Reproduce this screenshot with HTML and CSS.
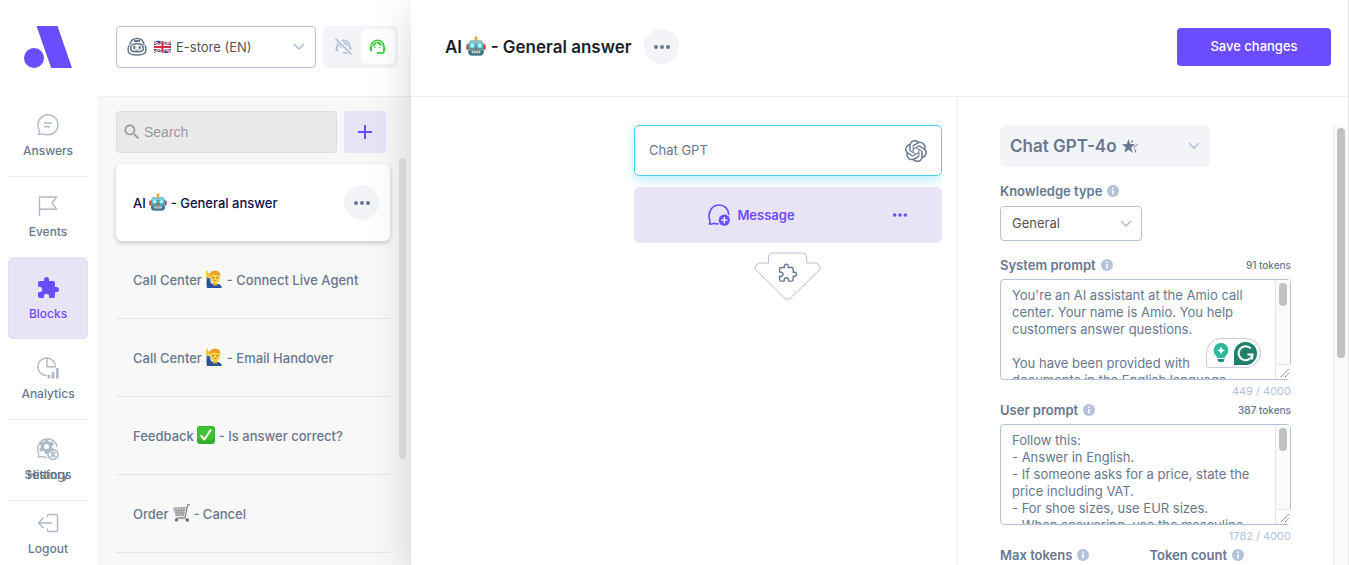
FILE: index.html
```html
<!DOCTYPE html>
<html lang="en">
<head>
  <meta charset="UTF-8" />
  <meta name="viewport" content="width=device-width, initial-scale=1.0" />
  <title>Blocks</title>
  <link rel="stylesheet" href="styles.css">
</head>
<body>

  <!-- ICONS -->
  <svg class="sprite" aria-hidden="true">
    <symbol id="i-robot" viewBox="0 0 18 18">
      <rect x="8.4" y="1.5" width="1.2" height="4" fill="#8a6d5c" />
      <circle cx="9" cy="1.8" r="1.5" fill="#f5a623" />
      <rect x="0.3" y="7.5" width="2.4" height="5" rx="1" fill="#c8403a" />
      <rect x="15.3" y="7.5" width="2.4" height="5" rx="1" fill="#c8403a" />
      <path d="M4 4h10l2 3v7c0 2.200-1 3.500-3 3.500H5c-2 0-3-1.300-3-3.500V7z" fill="#5b9aa3" />
      <path d="M4 4h10l2 3H2z" fill="#93bdc4" />
      <path d="M2 13.500h14c0 2.500-1 4-3 4H5c-2 0-3-1.500-3-4z" fill="#3f7782" />
      <circle cx="5.600" cy="8.500" r="2.400" fill="#5fe3f2" />
      <circle cx="12.400" cy="8.500" r="2.400" fill="#5fe3f2" />
      <circle cx="5.600" cy="8.500" r="1.100" fill="#fff" />
      <circle cx="12.400" cy="8.500" r="1.100" fill="#fff" />
      <path d="M9 9.500l1.300 2.500H7.700z" fill="#e03c31" />
      <rect x="5" y="13.600" width="8" height="2" rx="1" fill="#d7e3e5" />
      <path d="M7 13.600v2M9 13.600v2M11 13.600v2" stroke="#7c4b42" stroke-width=".6" />
    </symbol>
    <symbol id="i-person" viewBox="0 0 18 18">
      <path d="M1.500 7l4 1.500V15l-2.500-1c-1-2-1.500-4.500-1.500-7z" fill="#2f62a8" />
      <path d="M2 17.900c-.6-3-.6-5.500-.3-8l3 .5c.3 2 1.300 3 3.300 3.500h4c3 0 4.500 1.500 4.800 4z" fill="#2a5298" />
      <path d="M1.200 7.500C.8 5 .8 3 1.200.8c.5-.8 1.200-.7 1.500 0l.3 2 1.300.2c1 .5 1.200 2 .5 4.500z" fill="#fbc93d" />
      <rect x="8" y="11.500" width="4" height="4" fill="#e8a92c" />
      <path d="M5.300 6c0-3 2-4.800 4.900-4.800S15 3 15 6v2c0 3-2 5.500-4.800 5.500S5.300 11 5.300 8z" fill="#fcd04b" />
      <path d="M4.900 7.500C4.200 3.500 6 .5 10 .5c4.300 0 6 3 5.300 7l-.8-2.500c-2.500.3-4.500-.2-6-1-1 1-2.300 1.500-2.800 1.500z" fill="#e9a227" />
      <circle cx="8.200" cy="7.700" r=".7" fill="#5c4020" />
      <circle cx="12.200" cy="7.700" r=".7" fill="#5c4020" />
      <path d="M8.500 10.300q1.700 1.500 3.400 0z" fill="#a84f28" />
    </symbol>
    <symbol id="i-check" viewBox="0 0 18 18">
      <rect width="18" height="18" rx="3" fill="#2fb02a" />
      <rect x=".7" y=".7" width="16.600" height="13" rx="2.500" fill="#40c236" />
      <path d="M4.300 9.800l3 3.700L13.700 4" fill="none" stroke="#fff" stroke-width="2" stroke-linecap="round" stroke-linejoin="round" />
    </symbol>
    <symbol id="i-cart" viewBox="0 0 18 18">
      <path d="M1 4l13-.5-2 8-8.500.3z" fill="#c9c9c9" />
      <path d="M1 4l13-.5M1.600 6.500h12M2.500 9h10.600M3.500 11.700h9M3.700 4l1.500 7.500M6.500 4l.8 7.500M9.200 4v7.500M11.900 3.700l-.8 7.500" fill="none" stroke="#8b8b8b" stroke-width=".7" />
      <path d="M17.500.7h-1.700L13 13.500l-9 .8" fill="none" stroke="#777" stroke-width="1.100" stroke-linecap="round" />
      <path d="M4 14.300l11.500.8" stroke="#999" stroke-width=".8" />
      <circle cx="4.500" cy="16" r="1.600" fill="#555" /><circle cx="15.300" cy="16" r="1.700" fill="#555" />
      <circle cx="4.500" cy="16" r=".6" fill="#ccc" /><circle cx="15.300" cy="16" r=".6" fill="#ccc" />
    </symbol>
    <symbol id="i-flag-gb" viewBox="0 0 18 14">
      <path d="M0 1.500q4.500-2 9-.2t9-.3v11.500q-4.500 1.500-9 .2t-9 .3z" fill="#2b4594" />
      <path d="M0 1.500l18 11M18 1L0 13" stroke="#fff" stroke-width="2.400" />
      <path d="M0 1.500l18 11M18 1L0 13" stroke="#d5263b" stroke-width="1" />
      <path d="M9 1v12M0 7h18" stroke="#fff" stroke-width="4" />
      <path d="M9 1v12M0 7h18" stroke="#d5263b" stroke-width="2.300" />
    </symbol>
    <symbol id="i-dots" viewBox="0 0 18 6">
      <circle cx="3" cy="3" r="2" /><circle cx="9" cy="3" r="2" /><circle cx="15" cy="3" r="2" />
    </symbol>
    <symbol id="i-chevron" viewBox="0 0 12 8">
      <path d="M1.500 1.500L6 6l4.500-4.500" fill="none" stroke="currentColor" stroke-width="1.700" stroke-linecap="round" stroke-linejoin="round" />
    </symbol>
    <symbol id="i-info" viewBox="0 0 12 12">
      <circle cx="6" cy="6" r="6" fill="#b3c1d9" />
      <circle cx="6" cy="3.200" r=".9" fill="#fff" /><rect x="5.200" y="5" width="1.600" height="4.400" fill="#fff" />
    </symbol>
    <symbol id="i-agent" viewBox="0 0 24 24">
      <path d="M21 12.220C21 6.730 16.740 3 12 3c-4.690 0-9 3.650-9 9.280-.6.340-1 .980-1 1.720v2c0 1.100.9 2 2 2h1v-6.100c0-3.870 3.130-7 7-7s7 3.130 7 7V19h-8v2h8c1.100 0 2-.9 2-2v-1.220c.590-.310 1-.920 1-1.640v-2.300c0-.7-.410-1.310-1-1.620z" />
      <circle cx="9" cy="13" r="1" /><circle cx="15" cy="13" r="1" />
      <path d="M18 11.030C17.520 8.180 15.040 6 12.050 6c-3.030 0-6.290 2.510-6.030 6.450 2.470-1.010 4.330-3.210 4.860-5.890 1.310 2.630 4 4.440 7.120 4.470z" />
    </symbol>
    <symbol id="i-puzzle" viewBox="0 0 24 24">
      <path d="M20.500,11H19V7C19,5.890 18.100,5 17,5H13V3.500A2.500,2.500 0 0,0 10.500,1A2.500,2.500 0 0,0 8,3.500V5H4A2,2 0 0,0 2,7V10.800H3.500C5,10.800 6.200,12 6.200,13.500C6.200,15 5,16.200 3.500,16.200H2V20A2,2 0 0,0 4,22H7.800V20.500C7.800,19 9,17.800 10.500,17.800C12,17.800 13.200,19 13.200,20.500V22H17A2,2 0 0,0 19,20V16H20.500A2.500,2.500 0 0,0 23,13.500A2.500,2.500 0 0,0 20.500,11Z" />
    </symbol>
    <symbol id="i-resize" viewBox="0 0 15 15">
      <path d="M4.500 13L13 4.500M9 13l4-4" stroke="#555" stroke-width="1" stroke-dasharray="1.600 .6" />
    </symbol>
  </svg>

  <!-- SIDEBAR -->
  <nav class="sidebar">
    <a class="logo" href="#" aria-label="Home">
      <svg width="48" height="42" viewBox="0 0 48 42"><circle cx="10" cy="32" r="10" /><path d="M12.500 0h21L48 42H27.200z" /></svg>
    </a>
    <a class="nav-item" href="#">
      <svg width="22" height="22" viewBox="0 0 22 22" class="line"><path d="M1.800 20.200c.8-1.600.8-2.600.2-4.400C1.200 14 1 12.800 1 11A10 10 0 1 1 11 20.700c-2.500 0-3.700-.5-5-.8-1.500-.2-2.700.6-4.200.3zM7 9h8M7 12.800h6" /></svg>
      <span>Answers</span>
    </a>
    <a class="nav-item" href="#">
      <svg width="22" height="22" viewBox="0 0 22 22" class="line"><path d="M2.500 21V2h17l-4.500 6 4.500 6.200h-17" /></svg>
      <span>Events</span>
    </a>
    <a class="nav-item active" href="#">
      <svg width="24" height="24"><use href="#i-puzzle" /></svg>
      <span>Blocks</span>
    </a>
    <a class="nav-item" href="#">
      <svg width="22" height="22" viewBox="0 0 22 22" class="line"><path d="M10 18.600A8.800 8.800 0 1 1 18.400 9.800H10V1.200" /><path d="M12 21.500v-3.500M16 21.500v-6.500M20.300 21.500V11" stroke-width="2.700" /></svg>
      <span>Analytics</span>
    </a>
    <div class="nav-stack">
      <a class="nav-item" href="#">
        <svg width="22" height="22" viewBox="0 0 22 22" class="solid"><path fill-rule="evenodd" d="M8 1h3l.5 2.500 1.500.8 2.400-.9 1.600 2.600-1.900 1.700v1.800l1.900 1.700-1.600 2.600-2.400-.9-1.500.8L11 16H8l-.5-2.400-1.500-.8-2.400.9L2 11.100l1.900-1.700V7.700L2 6l1.600-2.600 2.400.9 1.500-.8zM9.500 6a2.600 2.600 0 1 0 0 5.200 2.600 2.600 0 0 0 0-5.200z" /></svg>
        <span>Settings</span>
      </a>
      <a class="nav-item" href="#">
        <svg width="22" height="22" viewBox="0 0 22 22" class="line"><path d="M10 19.500c-2.500 0-4-1-5.500-1-1.200 0-2 .5-3.200.2.600-1.700.2-3-.1-4.500C-.5 7 4 1 10.500 1c5 0 9 3.300 9.700 8" /><circle cx="16" cy="16.500" r="5" stroke-width="1.600" /><path d="M13 14l6 5M19 14l-6 5M16 13v7" /></svg>
        <span>History</span>
      </a>
    </div>
    <a class="nav-item logout" href="#">
      <svg width="22" height="22" viewBox="0 0 22 22" class="line"><path d="M10.500 5.500V4c0-1 .5-1.500 1.500-1.500h7c1 0 1.500.5 1.500 1.500v14c0 1-.5 1.500-1.500 1.500h-7c-1 0-1.500-.5-1.500-1.500v-1.500M15 11H1.500M6.500 5.700L1.500 11l5 5.300" /></svg>
      <span>Logout</span>
    </a>
  </nav>

  <!-- BLOCK LIST -->
  <section class="list">
    <header class="list-header">
      <div class="select-box">
        <svg class="bot" width="20" height="20" viewBox="0 0 20 20"><path d="M3 7.800C3.500 3.500 6 1.500 10 1.500s6.500 2 7 6.300M2.200 8.500C1 10 1 13 1.500 15c1 2.700 4 3 8.500 3s7.500-.3 8.500-3c.5-2 .5-5-.7-6.500" /><path d="M7 4h6" stroke-width="2" /><path d="M5.500 7.500c2-1 7-1 9 0 1.500 1 2 3 1.700 5-.5 2-3.200 2.300-6.200 2.300s-5.700-.3-6.200-2.300c-.3-2 .2-4 1.700-5z" /><path d="M7.300 9.800v1.400M12.700 9.800v1.400" stroke-width="2.200" stroke-linecap="round" /><path d="M8.500 13.100h3" stroke-width="1" /></svg>
        <svg width="17" height="14" role="img" aria-label="🇬🇧"><use href="#i-flag-gb" /></svg>
        <select aria-label="Bot"><option>E-store (EN)</option></select>
        <svg class="chevron" width="12" height="8"><use href="#i-chevron" /></svg>
      </div>
      <div class="toggle">
        <button type="button" aria-label="Agents off"><svg width="19" height="19" viewBox="0 0 24 24"><use href="#i-agent" /><path d="M2 1l21 21" stroke="#f2f4f8" stroke-width="5" /><path d="M2 2l20 20" stroke="currentColor" stroke-width="2" /></svg></button>
        <button type="button" class="on" aria-label="Agents on"><svg width="19" height="19"><use href="#i-agent" /></svg></button>
      </div>
    </header>

    <div class="list-body">
      <div class="search-row">
        <label class="search">
          <svg width="20" height="20" viewBox="0 0 24 24"><path d="M9.500,3A6.500,6.500 0 0,1 16,9.500C16,11.110 15.410,12.590 14.440,13.730L14.710,14H15.500L20.500,19L19,20.500L14,15.500V14.710L13.730,14.440C12.590,15.410 11.110,16 9.500,16A6.500,6.500 0 0,1 3,9.500A6.500,6.500 0 0,1 9.500,3M9.500,5C7,5 5,7 5,9.500C5,12 7,14 9.500,14C12,14 14,12 14,9.500C14,7 12,5 9.500,5Z" /></svg>
          <input type="text" placeholder="Search" aria-label="Search">
        </label>
        <button type="button" class="add" aria-label="Add block"><svg width="14" height="14" viewBox="0 0 14 14"><path d="M7 0v14M0 7h14" stroke="#6c4cff" stroke-width="2" /></svg></button>
      </div>
      <ul class="blocks">
        <li class="block selected">
          <a href="#">AI <svg class="emoji" role="img" aria-label="🤖"><use href="#i-robot" /></svg> - General answer</a>
          <button type="button" class="more" aria-label="More"><svg width="18" height="6"><use href="#i-dots" /></svg></button>
        </li>
        <li class="block"><a href="#">Call Center <svg class="emoji" role="img" aria-label="🙋‍♂️"><use href="#i-person" /></svg> - Connect Live Agent</a></li>
        <li class="block"><a href="#">Call Center <svg class="emoji" role="img" aria-label="🙋‍♂️"><use href="#i-person" /></svg> - Email Handover</a></li>
        <li class="block"><a href="#">Feedback <svg class="emoji" role="img" aria-label="✅"><use href="#i-check" /></svg> - Is answer correct?</a></li>
        <li class="block"><a href="#">Order <svg class="emoji" role="img" aria-label="🛒"><use href="#i-cart" /></svg> - Cancel</a></li>
      </ul>
      <div class="list-thumb"></div>
    </div>
  </section>

  <!-- EDITOR -->
  <main class="editor">
    <header class="editor-header">
      <h1>AI <svg class="emoji big" role="img" aria-label="🤖"><use href="#i-robot" /></svg> - General answer</h1>
      <button type="button" class="more" aria-label="More"><svg width="18" height="6"><use href="#i-dots" /></svg></button>
      <button type="button" class="save">Save changes</button>
    </header>

    <div class="editor-body">
      <div class="canvas">
        <div class="flow">
          <button type="button" class="node-gpt">
            <span>Chat GPT</span>
            <svg width="22" height="22" viewBox="0 0 24 24"><path d="M22.2819 9.8211a5.9847 5.9847 0 0 0-.5157-4.9108 6.0462 6.0462 0 0 0-6.5098-2.9A6.0651 6.0651 0 0 0 4.9807 4.1818a5.9847 5.9847 0 0 0-3.9977 2.9 6.0462 6.0462 0 0 0 .7427 7.0966 5.98 5.98 0 0 0 .511 4.9107 6.051 6.051 0 0 0 6.5146 2.9001A5.9847 5.9847 0 0 0 13.2599 24a6.0557 6.0557 0 0 0 5.7718-4.2058 5.9894 5.9894 0 0 0 3.9977-2.9001 6.0557 6.0557 0 0 0-.7475-7.0729zm-9.022 12.6081a4.4755 4.4755 0 0 1-2.8764-1.0408l.1419-.0804 4.7783-2.7582a.7948.7948 0 0 0 .3927-.6813v-6.7369l2.02 1.1686a.071.071 0 0 1 .038.052v5.5826a4.504 4.504 0 0 1-4.4945 4.4944zm-9.6607-4.1254a4.4708 4.4708 0 0 1-.5346-3.0137l.142.0852 4.783 2.7582a.7712.7712 0 0 0 .7806 0l5.8428-3.3685v2.3324a.0804.0804 0 0 1-.0332.0615L9.74 19.9502a4.4992 4.4992 0 0 1-6.1408-1.6464zM2.3408 7.8956a4.485 4.485 0 0 1 2.3655-1.9728V11.6a.7664.7664 0 0 0 .3879.6765l5.8144 3.3543-2.0201 1.1685a.0757.0757 0 0 1-.071 0l-4.8303-2.7865A4.504 4.504 0 0 1 2.3408 7.872zm16.5963 3.8558L13.1038 8.364 15.1192 7.2a.0757.0757 0 0 1 .071 0l4.8303 2.7913a4.4944 4.4944 0 0 1-.6765 8.1042v-5.6772a.79.79 0 0 0-.407-.667zm2.0107-3.0231l-.142-.0852-4.7735-2.7818a.7759.7759 0 0 0-.7854 0L9.409 9.2297V6.8974a.0662.0662 0 0 1 .0284-.0615l4.8303-2.7866a4.4992 4.4992 0 0 1 6.6802 4.66zM8.3065 12.863l-2.02-1.1638a.0804.0804 0 0 1-.038-.0567V6.0742a4.4992 4.4992 0 0 1 7.3757-3.4537l-.142.0805L8.704 5.459a.7948.7948 0 0 0-.3927.6813zm1.0976-2.3654l2.602-1.4998 2.6069 1.4998v2.9994l-2.5974 1.4997-2.6067-1.4997Z" /></svg>
          </button>
          <div class="node-message">
            <button type="button" class="message-btn">
              <svg width="22" height="22" viewBox="0 0 22 22"><path d="M10 19.800c-2 .5-3-.6-4.500-.3-1.500.5-2.700.8-4 .5 1-2.500.2-4-.2-5.500C0 7 4.500 1 11 1c5.500 0 9.500 4 9.700 9.300" fill="none" stroke="#6c4cff" stroke-width="1.700" stroke-linecap="round" /><circle cx="16.300" cy="16.200" r="5.600" fill="#6c4cff" /><path d="M16.300 13v6.400M13.100 16.200h6.400" stroke="#fff" stroke-width="1.300" /></svg>
              <span>Message</span>
            </button>
            <button type="button" class="message-more" aria-label="More"><svg width="16" height="6" viewBox="0 0 18 6"><use href="#i-dots" /></svg></button>
          </div>
          <button type="button" class="drop" aria-label="Add step">
            <svg width="68" height="50" viewBox="0 0 68 50"><path d="M14.500 11V5q0-4 4-4h30q4 0 4 4v6h9q5 1.500 5 4.500 0 1.500-1.500 3L36 46.500q-2.500 2-5 0L2.500 18.500Q1 17 1 15q1-3 4.500-4z" fill="none" stroke="#b3c1d9" /><path transform="translate(24 11.500) scale(.8)" d="M20.500,11H19V7C19,5.890 18.100,5 17,5H13V3.500A2.500,2.500 0 0,0 8,3.500V5H4A2,2 0 0,0 2,7V10.800H3.500C7,11 7,16 3.500,16.200H2V20A2,2 0 0,0 4,22H7.800V20.500C8,17 13,17 13.200,20.500V22H17A2,2 0 0,0 19,20V16H20.500A2.500,2.500 0 0,0 20.500,11Z" fill="none" stroke="#68778f" stroke-width="1.700" /></svg>
          </button>
        </div>
      </div>

      <aside class="settings">
        <form class="settings-form">
          <div class="model">
            <select aria-label="Model" class="model-select"><option>Chat GPT-4o</option></select>
            <svg class="star" width="16" height="15" viewBox="0 0 16 15"><path d="M6.500 0l1.700 5 5 .3-4 3.200 1.500 5.200-4.200-3-4.200 3 1.500-5.200L0 5.300l4.900-.3z" /><path d="M10.300 1l-.7 3M15.500 5.500l-3.500 2.700M12.500 9.500l1.300 4.200" stroke="#68778f" stroke-width="1" /></svg>
            <svg class="chevron" width="12" height="8"><use href="#i-chevron" /></svg>
          </div>

          <div class="field-head"><label for="ktype">Knowledge type</label><svg class="info"><use href="#i-info" /></svg></div>
          <div class="select-box small">
            <select id="ktype"><option>General</option></select>
            <svg class="chevron" width="12" height="8"><use href="#i-chevron" /></svg>
          </div>

          <div class="field-head"><label for="sys">System prompt</label><svg class="info"><use href="#i-info" /></svg><span class="tokens">91 tokens</span></div>
          <div class="area">
            <textarea id="sys" spellcheck="false">You're an AI assistant at the Amio call center. Your name is Amio. You help customers answer questions.

You have been provided with documents in the English language.</textarea>
            <div class="track"><div class="thumb"></div><svg width="15" height="15"><use href="#i-resize" /></svg></div>
            <div class="grammar">
              <svg width="16" height="20" viewBox="0 0 16 20"><path d="M8 0a7.300 7.300 0 0 0-4.500 13l.8 2h7.400l.8-2A7.300 7.300 0 0 0 8 0z" fill="#2bb896" /><path d="M4.500 16h7v1q-.5 2-2 2h-3q-1.500 0-2-2z" fill="#1f9379" /><path d="M8 3.500l1.200 2.800L12 7.500 9.200 8.700 8 11.500 6.800 8.700 4 7.500l2.800-1.200z" fill="#fff" /></svg>
              <svg width="23" height="23" viewBox="0 0 23 23"><path d="M11.500 0A11.500 11.500 0 0 1 11.500 23H0V11.500A11.500 11.500 0 0 1 11.500 0z" fill="#1f806c" /><path d="M16.800 6.500a7 7 0 1 0 1.700 6h-5M18.500 12.500l-.5 5" fill="none" stroke="#fff" stroke-width="2" /></svg>
            </div>
          </div>
          <p class="count">449 / 4000</p>

          <div class="field-head"><label for="usr">User prompt</label><svg class="info"><use href="#i-info" /></svg><span class="tokens">387 tokens</span></div>
          <div class="area">
            <textarea id="usr" spellcheck="false">Follow this:
- Answer in English.
- If someone asks for a price, state the price including VAT.
- For shoe sizes, use EUR sizes.
- When answering, use the masculine</textarea>
            <div class="track"><div class="thumb"></div><svg width="15" height="15"><use href="#i-resize" /></svg></div>
          </div>
          <p class="count">1782 / 4000</p>

          <div class="pair">
            <div class="field-head"><span>Max tokens</span><svg class="info"><use href="#i-info" /></svg></div>
            <div class="field-head"><span>Token count</span><svg class="info"><use href="#i-info" /></svg></div>
          </div>
        </form>
        <div class="page-track"><div class="thumb"></div></div>
      </aside>
    </div>
  </main>

</body>
</html>
```
FILE: styles.css
```css
* { margin: 0; padding: 0; box-sizing: border-box; }

body {
  display: flex;
  height: 100vh;
  overflow: hidden;
  background: #fff;
  color: #68778f;
  font-family: Inter, "Liberation Sans", sans-serif;
  font-size: 13px;
  line-height: 17px;
}

button, select, input, textarea {
  font: inherit;
  color: inherit;
  border: 0;
  background: none;
  outline: 0;
}

button { cursor: pointer; }
select { appearance: none; }
a { color: inherit; text-decoration: none; }
svg { flex-shrink: 0; fill: currentColor; }

.sprite {
  position: absolute;
  width: 0;
  height: 0;
}

.emoji {
  width: 18px;
  height: 18px;
  vertical-align: -3px;
}

.emoji.big {
  width: 20px;
  height: 20px;
}

.chevron {
  color: #b3c1d9;
  pointer-events: none;
}

/* SIDEBAR */
.sidebar {
  flex: 0 0 98px;
  padding: 0 10px 0 8px;
}

.logo {
  display: block;
  height: 96px;
  padding: 26px 16px 0;
  color: #6c4cff;
}

.nav-item {
  display: flex;
  flex-direction: column;
  align-items: center;
  justify-content: center;
  gap: 5px;
  height: 81px;
  border-bottom: 1px solid #eeeff2;
  font-size: 12px;
  font-weight: 500;
}

.nav-item svg { height: 24px; }

.nav-item.active {
  background: #e8e4f6;
  border: 1px solid #e0dbf2;
  border-radius: 5px;
  color: #6c4cff;
}

.nav-stack { display: grid; }
.nav-stack .nav-item { grid-area: 1 / 1; }

.nav-item.logout {
  height: 66px;
  border: 0;
}

.line {
  fill: none;
  stroke: #b0b9c8;
  stroke-width: 1.4px;
}

.solid { color: #b0b9c8; }

/* BLOCK LIST */
.list {
  display: flex;
  flex-direction: column;
  flex: 0 0 313px;
}

.list-header {
  display: flex;
  gap: 7px;
  height: 97px;
  padding: 26px 13px 0 18px;
  border-bottom: 1px solid #eeeff5;
}

.select-box {
  display: flex;
  align-items: center;
  gap: 5px;
  width: 200px;
  height: 42px;
  padding: 0 10px;
  border: 1px solid #b3c1d9;
  border-radius: 4px;
  color: #555;
}

.select-box select {
  flex: 1;
  min-width: 0;
}

.bot {
  fill: none;
  stroke: #68778f;
  stroke-width: 1.5px;
  margin-right: 2px;
}

.toggle {
  display: flex;
  flex: 1;
  height: 42px;
  padding: 3px;
  background: #f2f4f8;
  border-radius: 6px;
  color: #b3c1d9;
}

.toggle button {
  display: grid;
  place-items: center;
  flex: 1;
  height: 35px;
  border-radius: 5px;
}

.toggle .on {
  background: #fff;
  color: #3dcc3d;
}

.list-body {
  position: relative;
  flex: 1;
  padding: 14px 21px 0 18px;
  background: #f8f8f8;
  overflow: hidden;
}

.search-row {
  display: flex;
  gap: 7px;
  padding-right: 4px;
  margin-bottom: 11px;
}

.search {
  display: flex;
  align-items: center;
  gap: 2px;
  flex: 1;
  height: 42px;
  padding: 0 5px;
  background: #e9eaeb;
  border: 1px solid #dcdde0;
  border-radius: 4px;
  color: #999;
}

.search input {
  width: 100%;
  font-family: "Liberation Sans", Arial, sans-serif;
  font-size: 14px;
}

.search input::placeholder { color: #999; }

.add {
  width: 42px;
  height: 42px;
  background: #e8e4f8;
  border-radius: 4px;
  line-height: 0;
}

.blocks { list-style: none; }

.block {
  display: flex;
  align-items: center;
  justify-content: space-between;
  height: 78px;
  padding: 0 11px 0 17px;
  border-bottom: 1px solid #e6e7e9;
  font-weight: 500;
}

.block.selected {
  height: 77px;
  background: #fff;
  border: 0;
  border-radius: 6px;
  box-shadow: 0 2px 5px rgba(0, 0, 0, 0.2);
  color: #0a1045;
}

.more {
  display: grid;
  place-items: center;
  width: 35px;
  height: 35px;
  border-radius: 50%;
  background: #f2f4f8;
  color: #68778f;
}

.list-thumb {
  position: absolute;
  top: 61px;
  right: 5px;
  width: 7px;
  height: 301px;
  border-radius: 4px;
  background: #e0e1e3;
}

/* EDITOR */
.editor {
  display: flex;
  flex-direction: column;
  flex: 1;
  min-width: 0;
  position: relative;
  background: #fff;
  border-right: 1px solid #e8e8e8;
  box-shadow: 0 10px 40px rgba(45, 62, 80, 0.2);
}

.editor-header {
  display: flex;
  align-items: center;
  gap: 13px;
  height: 97px;
  padding: 0 17px 3px 34px;
  border-bottom: 1px solid #eeeff5;
}

.editor-header h1 {
  font-size: 17px;
  font-weight: 600;
  line-height: 22px;
  color: #1c1f2b;
}

.save {
  margin-left: auto;
  width: 154px;
  height: 38px;
  border-radius: 4px;
  background: #6c4cff;
  color: #fff;
  font-weight: 500;
}

.editor-body {
  display: flex;
  flex: 1;
  min-height: 0;
}

.canvas {
  display: flex;
  justify-content: flex-end;
  flex: 1;
  padding-right: 15px;
}

.flow {
  display: flex;
  flex-direction: column;
  align-items: center;
  width: 348px;
  padding: 28px 0 0 40px;
  overflow: hidden;
}

.node-gpt {
  display: flex;
  align-items: center;
  justify-content: space-between;
  width: 100%;
  height: 51px;
  padding: 0 14px;
  margin-bottom: 11px;
  border: 1px solid #4fd2f0;
  border-radius: 5px;
  box-shadow: 0 4px 12px rgba(79, 210, 240, 0.4);
}

.node-message {
  display: flex;
  width: 100%;
  height: 56px;
  padding-right: 11px;
  margin-bottom: 9px;
  background: #e8e4f6;
  border-radius: 6px;
  color: #6c4cff;
  position: relative;
}

.message-btn {
  display: flex;
  align-items: center;
  justify-content: center;
  gap: 7px;
  flex: 1;
  font-weight: 600;
}

.message-more {
  width: 62px;
  line-height: 0;
}

.drop { line-height: 0; }

/* SETTINGS */
.settings {
  display: flex;
  justify-content: space-between;
  flex: 0 0 391px;
  padding: 28px 0 0 42px;
  border-left: 1px solid #eeeff5;
  overflow: hidden;
}

.settings-form { width: 291px; }

.model {
  display: flex;
  align-items: center;
  gap: 5px;
  width: 210px;
  height: 42px;
  padding: 0 10px;
  margin-bottom: 14px;
  background: #f2f4f8;
  border-radius: 6px;
}

.model-select {
  font-size: 17px;
  font-weight: 600;
  line-height: 22px;
}

.model .chevron { margin-left: auto; }

.field-head {
  display: flex;
  align-items: center;
  gap: 5px;
  height: 20px;
  margin-bottom: 4px;
  font-weight: 600;
}

.info {
  width: 12px;
  height: 12px;
}

.tokens {
  margin-left: auto;
  font-size: 10px;
  font-weight: 500;
}

.select-box.small {
  width: 142px;
  height: 35px;
  margin: 5px 0 14px;
  padding: 0 9px 0 11px;
}

.area {
  position: relative;
  height: 101px;
  border: 1px solid #b3c1d9;
  border-radius: 4px;
}

.area textarea {
  display: block;
  width: 100%;
  height: 99px;
  padding: 7px 30px 0 11px;
  resize: none;
  overflow: hidden;
}

.track {
  position: absolute;
  top: 0;
  right: 0;
  bottom: 0;
  display: flex;
  flex-direction: column;
  justify-content: space-between;
  width: 15px;
  border-left: 1px solid #e5e5e5;
  background: #fafafa;
}

.track svg {
  border-top: 1px solid #e5e5e5;
  background: #fff;
}

.thumb {
  width: 8px;
  height: 23px;
  margin: 3px;
  border-radius: 4px;
  background: #c1c1c1;
}

.grammar {
  position: absolute;
  right: 29px;
  bottom: 11px;
  display: flex;
  align-items: center;
  justify-content: space-between;
  width: 55px;
  height: 30px;
  padding: 0 3px 0 6px;
  border: 1px solid #c9cddc;
  border-radius: 15px 15px 15px 2px;
  background: #fff;
}

.count {
  padding-top: 3px;
  margin-bottom: 1px;
  font-size: 11px;
  line-height: 16px;
  text-align: right;
  color: #b3c1d9;
}

.pair {
  display: grid;
  grid-template-columns: 1fr 1fr;
  gap: 8px;
}

.page-track {
  width: 15px;
  border-left: 1px solid #e8e8e8;
  background: #fafafa;
}

.page-track .thumb { height: 230px; }
```
